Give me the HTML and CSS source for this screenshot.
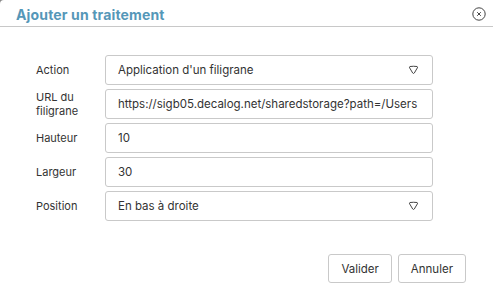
FILE: index.html
```html
<!DOCTYPE html>
<html lang="fr">
<head>
<meta charset="UTF-8" />
<title>Ajouter un traitement</title>
<link rel="stylesheet" href="styles.css">
</head>
<body>
<div class="dialog">
  <div class="dialog-header">
    <h2>Ajouter un traitement</h2>
    <span class="close">
      <svg width="14" height="14" viewBox="0 0 14 14"><circle cx="7" cy="7" r="6.2" fill="none" stroke="#444" stroke-width="1"/><path d="M5.2 5.2 L8.8 8.8 M8.8 5.2 L5.2 8.8" stroke="#444" stroke-width="1"/></svg>
    </span>
  </div>

  <div class="dialog-body">
    <div class="row">
      <label>Action</label>
      <div class="field select">Application d'un filigrane
        <svg class="caret" width="11" height="10" viewBox="0 0 11 10"><path d="M2 1.5 Q5.5 1 9 1.5 Q10 1.8 9.4 2.8 L6.3 8 Q5.5 9 4.7 8 L1.6 2.8 Q1 1.8 2 1.5 Z" fill="none" stroke="#444" stroke-width="1"/></svg>
      </div>
    </div>
    <div class="row">
      <label>URL du<br>filigrane</label>
      <div class="field">https://sigb05.decalog.net/sharedstorage?path=/Users</div>
    </div>
    <div class="row">
      <label>Hauteur</label>
      <div class="field">10</div>
    </div>
    <div class="row">
      <label>Largeur</label>
      <div class="field">30</div>
    </div>
    <div class="row">
      <label>Position</label>
      <div class="field select">En bas à droite
        <svg class="caret" width="11" height="10" viewBox="0 0 11 10"><path d="M2 1.5 Q5.5 1 9 1.5 Q10 1.8 9.4 2.8 L6.3 8 Q5.5 9 4.7 8 L1.6 2.8 Q1 1.8 2 1.5 Z" fill="none" stroke="#444" stroke-width="1"/></svg>
      </div>
    </div>
  </div>

  <div class="dialog-footer">
    <button>Valider</button>
    <button>Annuler</button>
  </div>
</div>
</body>
</html>
```

FILE: styles.css
```css
body {
  margin: 0;
  background: #888;
  font-family: Inter, 'Noto Sans', sans-serif;
  color: #333;
}

.dialog {
  background: #fff;
  width: 493px;
  height: 303px;
  border-radius: 4px 0 0 0;
  display: flex;
  flex-direction: column;
}

.dialog-header {
  display: flex;
  align-items: center;
  justify-content: space-between;
  height: 26px;
  padding: 0 7px 0 16px;
  border-bottom: 1px solid #c8c8c8;
}
.dialog-header h2 {
  margin: 2px 0 0 0;
  font-size: 14px;
  font-weight: 700;
  color: #5597b8;
  letter-spacing: 0.15px;
}
.close {
  display: flex;
  margin-top: 1px;
}

.dialog-body {
  padding: 28px 0 0 36px;
  display: flex;
  flex-direction: column;
  gap: 4px;
}

.row {
  display: flex;
  align-items: center;
}
.row label {
  width: 69px;
  font-size: 11px;
  line-height: 14px;
  color: #333;
}

.field {
  width: 302px;
  height: 28px;
  border: 1px solid #c9c9c9;
  border-radius: 3px;
  padding: 0 12px;
  box-sizing: content-box;
  font-size: 11.5px;
  line-height: 28px;
  white-space: nowrap;
  overflow: hidden;
  display: flex;
  align-items: center;
}
.select {
  justify-content: space-between;
}
.caret {
  margin-right: 1px;
}

.dialog-footer {
  display: flex;
  justify-content: flex-end;
  gap: 6px;
  padding: 33px 27px 0 0;
}
.dialog-footer button {
  font-family: inherit;
  font-size: 11.5px;
  color: #333;
  background: #fff;
  border: 1px solid #c9c9c9;
  border-radius: 3px;
  height: 29px;
  padding: 0 12px;
}
```
